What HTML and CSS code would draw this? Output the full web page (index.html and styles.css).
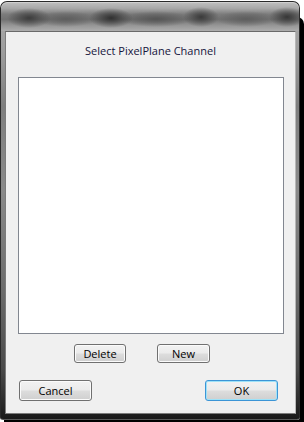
FILE: index.html
```html
<!DOCTYPE html>
<html>
<head>
<meta charset="utf-8">
<link rel="stylesheet" href="styles.css">
</head>
<body>
<div class="window">
  <div class="titlebar"></div>
  <div class="client">
    <div class="heading">Select PixelPlane Channel</div>
    <div class="listbox"></div>
    <div class="row-mid">
      <button class="btn btn-delete">Delete</button>
      <button class="btn btn-new">New</button>
    </div>
    <div class="row-bottom">
      <button class="btn btn-wide">Cancel</button>
      <button class="btn btn-wide btn-default">OK</button>
    </div>
  </div>
</div>
</body>
</html>
```
FILE: styles.css
```css
html, body {
  margin: 0;
  padding: 0;
}
body {
  width: 304px;
  height: 422px;
  overflow: hidden;
  background: #ffffff;
  font-family: "Open Sans", "Noto Sans", "DejaVu Sans", sans-serif;
}
.window {
  box-sizing: border-box;
  margin-top: 1px;
  width: 300px;
  height: 419px;
  border: 1px solid #2a2a2a;
  border-bottom-color: #5a5a5a;
  border-radius: 7px 7px 3px 3px;
  box-shadow: 4px 16px 0 0 #000;
  display: flex;
  flex-direction: column;
  background: linear-gradient(to bottom, #b0b0b0 0%, #9c9c9c 12%, #7e7e7e 25%, #8a8a8a 45%, #6a6a6a 70%, #4a4a4a 88%, #262626 97%, #1a1a1a 100%);
  overflow: hidden;
}
.titlebar {
  height: 29px;
  flex: none;
  border-radius: 6px 6px 0 0;
  box-shadow: inset 0 1px 0 #d0d0d0;
  background:
    radial-gradient(ellipse 22px 10px at 28px 16px, #3c3c3c, rgba(60,60,60,0)),
    radial-gradient(ellipse 22px 10px at 110px 16px, #303030, rgba(48,48,48,0)),
    radial-gradient(ellipse 18px 10px at 200px 15px, #3a3a3a, rgba(58,58,58,0)),
    radial-gradient(ellipse 18px 10px at 286px 15px, #363636, rgba(54,54,54,0)),
    radial-gradient(ellipse 36px 8px at 155px 17px, #555555, rgba(85,85,85,0)),
    radial-gradient(ellipse 30px 8px at 245px 17px, #5e5e5e, rgba(94,94,94,0)),
    radial-gradient(ellipse 30px 8px at 65px 17px, #5e5e5e, rgba(94,94,94,0)),
    linear-gradient(to bottom, #c0c0c0 0%, #a8a8a8 22%, #7c7c7c 42%, #727272 60%, #959595 80%, #adadad 100%);
}
.client {
  flex: none;
  box-sizing: border-box;
  width: 291px;
  height: 383px;
  margin-left: 4px;
  background: #f0f0f0;
  border: 1px solid #7c7c7c;
  border-top-color: #6a6a6a;
  border-right-color: #b8b8b8;
  display: flex;
  flex-direction: column;
}
.heading {
  margin-top: 11px;
  height: 16px;
  line-height: 16px;
  text-align: center;
  font-size: 11px;
  color: #14143c;
}
.listbox {
  box-sizing: border-box;
  margin-top: 18px;
  margin-left: 12px;
  width: 266px;
  height: 257px;
  background: #ffffff;
  border: 1px solid #828790;
}
.row-mid {
  display: flex;
  margin-top: 10px;
  padding-left: 68px;
  gap: 31px;
}
.row-bottom {
  display: flex;
  justify-content: space-between;
  margin-top: 17px;
  padding-left: 13px;
  padding-right: 17px;
}
.btn {
  box-sizing: border-box;
  margin: 0;
  padding: 0;
  font-family: "Open Sans", "Noto Sans", "DejaVu Sans", sans-serif;
  font-size: 11px;
  color: #000;
  border: 1px solid #707070;
  border-radius: 3px;
  background: linear-gradient(to bottom, #f2f2f2 0%, #ebebeb 48%, #dddddd 52%, #cfcfcf 100%);
  box-shadow: inset 0 0 0 1px #fbfbfb;
  display: flex;
  align-items: center;
  justify-content: center;
}
.btn-delete {
  width: 52px;
  height: 19px;
}
.btn-new {
  width: 53px;
  height: 19px;
}
.btn-wide {
  width: 73px;
  height: 21px;
}
.btn-default {
  border-color: #3c95d6;
  box-shadow: inset 0 0 0 1px #9ee2f8;
}
```
